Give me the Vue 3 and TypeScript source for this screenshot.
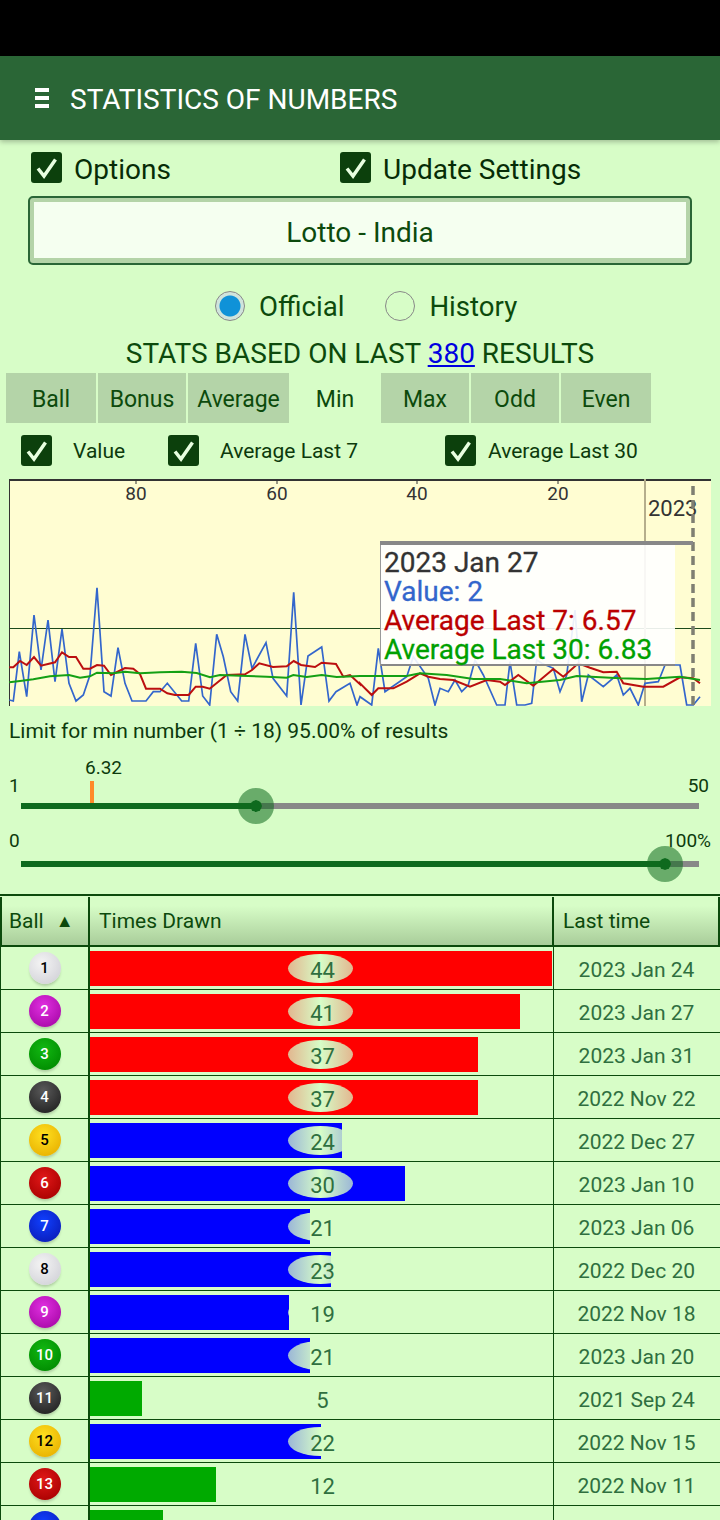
<template>
  <div class="screen">
    <div class="status-bar"></div>
    <header class="app-bar">
      <div class="menu-icon"><span></span><span></span><span></span></div>
      <h1>STATISTICS OF NUMBERS</h1>
    </header>

    <div class="options-row">
      <label class="check big">
        <span class="box"><svg viewBox="0 0 31 31"><path d="M7 16.500l6 7.500L24.500 7.500" /></svg></span>
        <span class="check-text">Options</span>
      </label>
      <label class="check big">
        <span class="box"><svg viewBox="0 0 31 31"><path d="M7 16.500l6 7.500L24.500 7.500" /></svg></span>
        <span class="check-text">Update Settings</span>
      </label>
    </div>

    <div class="select-box"><div class="select-inner">Lotto - India</div></div>

    <div class="radio-row">
      <label class="radio"><span class="dot on"></span>Official</label>
      <label class="radio"><span class="dot"></span>History</label>
    </div>

    <div class="stats-line">STATS BASED ON LAST <a>380</a> RESULTS</div>

    <nav class="tabs">
      <div
        v-for="tab in tabs"
        :key="tab.label"
        class="tab"
        :class="[tab.cls, { active: tab.label === 'Min' }]"
      >{{ tab.label }}</div>
    </nav>

    <div class="series-row">
      <label v-for="s in seriesChecks" :key="s.label" class="check small" :class="s.cls">
        <span class="box"><svg viewBox="0 0 31 31"><path d="M7 16.500l6 7.500L24.500 7.500" /></svg></span>
        <span>{{ s.label }}</span>
      </label>
    </div>

    <div class="chart">
      <svg class="plot" viewBox="0 0 702 227" width="702" height="227">
        <rect width="702" height="227" fill="#fffdd2" />
        <line x1="0" y1="1" x2="702" y2="1" stroke="#333" stroke-width="2" />
        <line x1="0.5" y1="0" x2="0.5" y2="227" stroke="#333" stroke-width="1" />
        <line x1="0" y1="149.500" x2="702" y2="149.500" stroke="#1c4a1c" stroke-width="1" />
        <line x1="636" y1="0" x2="636" y2="227" stroke="#b5ae8c" stroke-width="2" />
        <g v-for="t in ticks" :key="t.label">
          <line :x1="t.x" y1="0" :x2="t.x" y2="5" stroke="#333" stroke-width="1" />
          <text :x="t.x" y="21" text-anchor="middle" class="tick">{{ t.label }}</text>
        </g>
        <text x="639" y="37" class="year">2023</text>
        <polyline :points="bluePoints" class="line" stroke="#3366cc" />
        <polyline :points="redPoints" class="line thick" stroke="#bb0f0f" />
        <polyline :points="greenPoints" class="line thick" stroke="#14a014" />
        <line x1="684" y1="7" x2="684" y2="227" stroke="#7f7f72" stroke-width="3.500" stroke-dasharray="9 5" />
      </svg>
      <div class="tooltip">
        <div class="tip-date">2023 Jan 27</div>
        <div class="tip-value">Value: 2</div>
        <div class="tip-seven">Average Last 7: 6.57</div>
        <div class="tip-thirty">Average Last 30: 6.83</div>
      </div>
      <div class="crosshair"></div>
    </div>

    <p class="limit">Limit for min number (1 ÷ 18) 95.00% of results</p>

    <div class="slider first">
      <div class="slider-labels"><span>1</span><span>50</span></div>
      <div class="mark-label">6.32</div>
      <div class="mark"></div>
      <div class="track">
        <div class="fill" :style="{ width: '235px' }"></div>
        <div class="thumb" :style="{ left: '235px' }"></div>
      </div>
    </div>

    <div class="slider second">
      <div class="slider-labels"><span>0</span><span>100%</span></div>
      <div class="track">
        <div class="fill" :style="{ width: '644px' }"></div>
        <div class="thumb" :style="{ left: '644px' }"></div>
      </div>
    </div>

    <section class="table">
      <div class="row head">
        <div class="cell ball-cell">Ball <span class="arrow">▲</span></div>
        <div class="cell times-cell">Times Drawn</div>
        <div class="cell last-cell">Last time</div>
      </div>
      <div v-for="row in rows" :key="row.ball" class="row">
        <div class="cell ball-cell">
          <span class="ball" :class="ballClass(row.ball)">{{ row.ball }}</span>
        </div>
        <div class="cell times-cell">
          <div class="bar" :class="barClass(row.times)" :style="{ width: Math.floor(row.times * 10.5) + 'px' }">
            <span class="pill"></span>
          </div>
          <span class="count">{{ row.times }}</span>
        </div>
        <div class="cell date-cell">{{ row.last }}</div>
      </div>
    </section>
  </div>
</template>

<script setup lang="ts">
interface Row {
  ball: number
  times: number
  last: string
}

const tabs = [
  { label: 'Ball', cls: 'w90' },
  { label: 'Bonus', cls: 'w88' },
  { label: 'Average', cls: 'w101' },
  { label: 'Min', cls: 'w92' },
  { label: 'Max', cls: 'w88' },
  { label: 'Odd', cls: 'w88' },
  { label: 'Even', cls: 'w90' },
]

const seriesChecks = [
  { label: 'Value', cls: 'col-a' },
  { label: 'Average Last 7', cls: 'col-b' },
  { label: 'Average Last 30', cls: 'col-c' },
]

const ticks = [
  { label: '80', x: 127 },
  { label: '60', x: 268 },
  { label: '40', x: 408 },
  { label: '20', x: 549 },
]

const rows: Row[] = [
  { ball: 1, times: 44, last: '2023 Jan 24' },
  { ball: 2, times: 41, last: '2023 Jan 27' },
  { ball: 3, times: 37, last: '2023 Jan 31' },
  { ball: 4, times: 37, last: '2022 Nov 22' },
  { ball: 5, times: 24, last: '2022 Dec 27' },
  { ball: 6, times: 30, last: '2023 Jan 10' },
  { ball: 7, times: 21, last: '2023 Jan 06' },
  { ball: 8, times: 23, last: '2022 Dec 20' },
  { ball: 9, times: 19, last: '2022 Nov 18' },
  { ball: 10, times: 21, last: '2023 Jan 20' },
  { ball: 11, times: 5, last: '2021 Sep 24' },
  { ball: 12, times: 22, last: '2022 Nov 15' },
  { ball: 13, times: 12, last: '2022 Nov 11' },
  { ball: 14, times: 7, last: '' },
]

const ballColors = ['white', 'magenta', 'green', 'dark', 'yellow', 'red', 'blue']

const ballClass = (n: number) => ballColors[(n - 1) % ballColors.length]

const barClass = (times: number) => {
  if (times >= 37) return 'hot'
  if (times >= 19) return 'warm'
  return 'cold'
}

// traced from the chart, [x, y] at 3x, left half and right half separately
const blueLeft = [[28,675],[40,678],[58,530],[80,665],[102,420],[123,585],[144,435],[165,620],[186,462],[207,625],[228,678],[250,660],[270,600],[291,338],[312,650],[333,663],[354,518],[375,625],[396,678],[438,678],[460,650],[480,650],[502,625],[545,678],[566,678],[587,505],[608,663],[629,690],[650,478],[670,545],[692,650],[713,678],[735,478],[756,580],[798,503],[819,610],[860,663],[881,352],[903,690],[924,543],[965,516],[987,678],[1008,650],[1050,625],[1071,690]]
const blueRight = [[0,665],[35,690],[55,520],[75,650],[140,605],[160,545],[205,610],[225,690],[240,640],[265,650],[285,615],[305,650],[325,630],[345,555],[370,600],[410,690],[435,690],[450,560],[470,690],[495,690],[515,685],[530,555],[545,565],[580,580],[600,650],[620,600],[645,405],[665,680],[685,600],[730,635],[770,600],[790,660],[810,640],[835,690],[855,625],[895,620],[915,570],[960,570],[980,690],[1000,690],[1020,665]]
const redLeft = [[28,577],[40,577],[60,558],[80,570],[102,546],[123,572],[165,562],[186,532],[207,546],[228,546],[250,581],[270,581],[291,570],[312,572],[333,600],[375,579],[400,581],[420,597],[438,641],[480,641],[502,655],[525,660],[566,660],[587,635],[608,635],[629,641],[680,600],[735,598],[756,585],[778,565],[819,576],[860,574],[881,558],[903,570],[945,576],[965,563],[1008,567],[1030,605],[1050,600],[1080,628]]
const redRight = [[0,625],[35,660],[55,640],[100,640],[140,620],[180,595],[205,605],[240,612],[280,615],[330,635],[380,615],[420,620],[435,630],[475,600],[520,632],[580,582],[610,605],[655,565],[690,578],[730,592],[770,590],[790,625],[850,635],[910,635],[960,607],[1000,610],[1020,625]]
const greenLeft = [[28,622],[60,618],[100,613],[150,604],[207,600],[240,608],[270,604],[291,593],[340,595],[375,590],[420,595],[480,592],[545,590],[590,594],[630,607],[660,600],[720,602],[800,605],[860,608],[880,600],[920,606],[965,600],[1010,606],[1080,603]]
const greenRight = [[0,603],[140,603],[180,595],[260,600],[340,612],[420,612],[500,625],[600,615],[650,603],[780,610],[860,612],[960,605],[1020,615]]

const toPoints = (left: number[][], right: number[][]) => {
  const l = left.map(([x, y]) => `${(x / 3 - 9).toFixed(1)},${(y / 3 - 4).toFixed(1)}`)
  const r = right.map(([x, y]) => `${(x / 3 + 351).toFixed(1)},${(y / 3 - 4).toFixed(1)}`)
  return [...l, ...r].join(' ')
}

const bluePoints = toPoints(blueLeft, blueRight)
const redPoints = toPoints(redLeft, redRight)
const greenPoints = toPoints(greenLeft, greenRight)
</script>

<style scoped>
.screen {
  width: 720px;
  height: 1520px;
  overflow: hidden;
  background: #d7fdc7;
  font-family: Roboto, sans-serif;
  color: #0c4a0c;
}

.status-bar {
  height: 56px;
  background: #000;
}

.app-bar {
  height: 84px;
  box-sizing: border-box;
  padding: 3px 0 0 35px;
  background: #2a6636;
  display: flex;
  align-items: center;
  box-shadow: 0 2px 5px rgba(0, 0, 0, 0.25);
  position: relative;
}

.app-bar h1 {
  margin: 0 0 0 21px;
  font-size: 28px;
  font-weight: 400;
  color: #fff;
}

.menu-icon {
  width: 14px;
  height: 20px;
  margin-top: -3px;
  display: flex;
  flex-direction: column;
  justify-content: space-between;
}

.menu-icon span {
  height: 4px;
  background: #fff;
}

.options-row {
  display: grid;
  grid-template-columns: 309px 1fr;
  padding: 12px 0 0 31px;
}

.check {
  display: flex;
  align-items: center;
  height: 31px;
}

.box {
  width: 31px;
  height: 31px;
  flex: none;
  background: #0c400c;
  border-radius: 3px;
}

.box svg {
  display: block;
  width: 31px;
  height: 31px;
  fill: none;
  stroke: #e8ffe0;
  stroke-width: 3.500;
}

.check.big {
  font-size: 28px;
  gap: 12px;
  color: #062c06;
}

.check-text {
  margin-top: 4px;
}

.select-box {
  margin: 13px 28px 0;
  height: 69px;
  box-sizing: border-box;
  border: 2px solid #2a6636;
  border-radius: 5px;
  background: #b4d4a8;
  padding: 4px 4px 5px;
}

.select-inner {
  height: 100%;
  box-sizing: border-box;
  padding-top: 4px;
  background: #f5fff0;
  display: flex;
  align-items: center;
  justify-content: center;
  font-size: 28px;
}

.radio-row {
  display: flex;
  gap: 41px;
  padding: 26px 0 0 215px;
}

.radio {
  display: flex;
  align-items: center;
  gap: 14px;
  font-size: 27.600px;
  height: 30px;
}

.dot {
  width: 30px;
  height: 30px;
  box-sizing: border-box;
  border-radius: 50%;
  border: 1.500px solid #888;
}

.dot.on {
  background: radial-gradient(circle, #0f92d8 0 10px, #cfe4dc 11px);
}

.stats-line {
  margin-top: 13px;
  line-height: 39px;
  font-size: 28px;
  text-align: center;
}

.stats-line a {
  color: #0000e0;
  text-decoration: underline;
}

.tabs {
  display: flex;
  padding-left: 6px;
  height: 50px;
}

.tab {
  display: flex;
  align-items: center;
  justify-content: center;
  padding-top: 2px;
  box-sizing: border-box;
  background: #b4d4a8;
  font-size: 23px;
  margin-right: 2px;
}

.tab.w90 { width: 90px; }
.tab.w88 { width: 88px; }
.tab.w101 { width: 101px; margin-right: 0; }
.tab.w92 { width: 92px; margin-right: 0; }

.tab.active {
  background: transparent;
}

.series-row {
  display: flex;
  margin-top: 12px;
  padding-left: 21px;
}

.check.small {
  font-size: 21px;
  gap: 21px;
  color: #0c3a0c;
}

.col-a { width: 147px; }
.col-b { width: 277px; }
.check.col-c { gap: 12px; }

.chart {
  position: relative;
  width: 702px;
  height: 227px;
  margin: 13px 0 0 9px;
}

.plot {
  display: block;
}

.tick {
  font-size: 19px;
  fill: #333;
}

.year {
  font-size: 22px;
  fill: #333;
}

.line {
  fill: none;
  stroke-width: 1.700;
}

.line.thick {
  stroke-width: 2;
}

.crosshair {
  position: absolute;
  left: 371px;
  top: 62px;
  width: 313px;
  height: 4px;
  background: #888;
}

.tooltip {
  position: absolute;
  left: 371px;
  top: 64px;
  width: 295px;
  height: 123px;
  box-sizing: border-box;
  padding: 5px 0 0 3px;
  background: rgba(255, 255, 255, 0.9);
  border-left: 1px solid #999;
  border-bottom: 2px solid #888;
  font-size: 28px;
  line-height: 29px;
  white-space: nowrap;
  -webkit-text-stroke: 0.300px currentColor;
}

.tip-date { color: #333; }
.tip-value { color: #3366cc; }
.tip-seven { color: #bb0000; }
.tip-thirty { color: #00a000; }

.limit {
  margin: 10px 0 0 9px;
  line-height: 30px;
  font-size: 21px;
  color: #0c3a0c;
}

.slider {
  position: relative;
}

.slider.first { margin-top: 30px; }
.slider.second { margin-top: 22px; }

.slider-labels {
  display: flex;
  justify-content: space-between;
  padding: 0 9px;
  line-height: 20px;
  font-size: 19px;
  color: #0c3a0c;
}

.first .slider-labels { padding-right: 11px; }

.mark-label {
  position: absolute;
  left: 85px;
  top: -18px;
  font-size: 19px;
  line-height: 20px;
  color: #0c3a0c;
}

.mark {
  position: absolute;
  left: 90px;
  top: 5px;
  width: 4px;
  height: 23px;
  background: #ff8a2a;
}

.track {
  position: relative;
  height: 6px;
  margin: 7px 21px 0;
  background: #888;
}

.second .track { margin-top: 10px; }

.fill {
  height: 100%;
  background: #0e6a1e;
}

.thumb {
  position: absolute;
  top: 3px;
  width: 12px;
  height: 12px;
  margin: -18px 0 0 -18px;
  border: 12px solid rgba(14, 106, 30, 0.55);
  border-radius: 50%;
  background: #0e6a1e;
  background-clip: padding-box;
}

.table {
  margin-top: 27px;
  border-top: 2px solid #0c4a0c;
}

.row {
  display: grid;
  grid-template-columns: 90px 464px 1fr;
  height: 43px;
  box-sizing: border-box;
  border-bottom: 1px solid #0c4a0c;
}

.row.head {
  height: 51px;
  padding-top: 1px;
  border-bottom: 2px solid #0c4a0c;
  background: linear-gradient(#d7fdc7 20%, #a9cd9a);
  font-size: 21px;
  color: #0c4a0c;
}

.cell {
  display: flex;
  align-items: center;
  position: relative;
}

.ball-cell {
  justify-content: center;
  border-left: 1px solid #0c4a0c;
  border-right: 2px solid #0c4a0c;
  box-sizing: border-box;
}

.head .ball-cell {
  justify-content: flex-start;
  padding-left: 7px;
  border-left-width: 2px;
}

.arrow {
  margin-left: 12px;
  font-size: 18px;
}

.times-cell {
  border-right: 1px solid #0c4a0c;
}

.head .times-cell {
  padding-left: 9px;
  border-right-width: 2px;
}

.last-cell {
  padding-left: 9px;
  border-right: 2px solid #0c4a0c;
}

.date-cell {
  justify-content: center;
  font-size: 21px;
  color: #2f6f3f;
  padding: 3px 1px 0 0;
}

.ball {
  width: 32px;
  height: 32px;
  border-radius: 50%;
  display: flex;
  align-items: center;
  justify-content: center;
  font-size: 15px;
  font-weight: 500;
  color: #fff;
  box-shadow: 0 3px 3px -1px rgba(0, 0, 0, 0.2);
}

.ball.white { background: radial-gradient(circle at 40% 35%, #f4f4f4, #d4d4da 80%); color: #000; }
.ball.magenta { background: radial-gradient(circle at 45% 35%, #e030e0, #a808a8 85%); }
.ball.green { background: radial-gradient(circle at 45% 35%, #12b812, #008a00 85%); }
.ball.dark { background: radial-gradient(circle at 45% 30%, #5a5a5a, #222 85%); }
.ball.yellow { background: radial-gradient(circle at 45% 35%, #ffe020, #e8b000 85%); color: #000; }
.ball.red { background: radial-gradient(circle at 45% 35%, #e01818, #a80000 85%); }
.ball.blue { background: radial-gradient(circle at 45% 35%, #1040ff, #0a1cb8 85%); }

.bar {
  position: relative;
  height: 35px;
  overflow: hidden;
}

.bar.hot { background: #ff0000; }
.bar.warm { background: #0000ff; }
.bar.cold { background: #00aa00; }

.pill {
  position: absolute;
  left: 198px;
  top: 3px;
  width: 65px;
  height: 29px;
  border-radius: 50%;
  background: linear-gradient(90deg, rgba(215, 253, 199, 0.72), #d7fdc7 50%, rgba(215, 253, 199, 0.72));
}

.cold .pill { display: none; }

.count {
  position: absolute;
  left: 200px;
  width: 65px;
  padding-top: 4px;
  text-align: center;
  font-size: 22px;
  color: #2f6f3f;
}
</style>

<style>
html, body {
  margin: 0;
  background: #d7fdc7;
}
</style>
